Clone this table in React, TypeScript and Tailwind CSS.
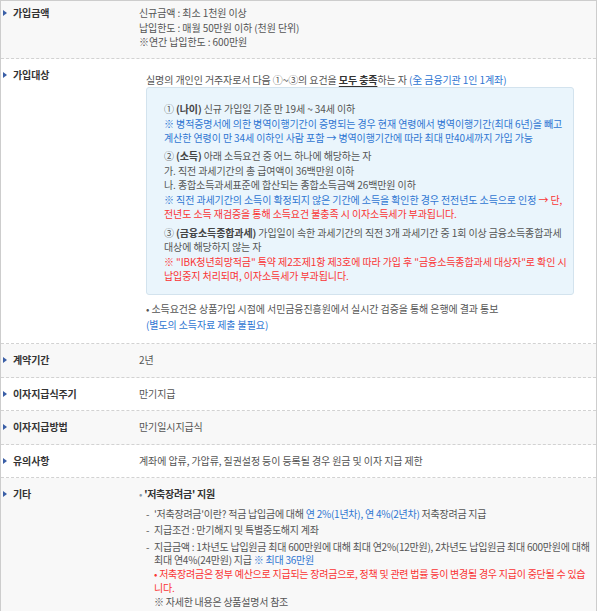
import React from "react";

function Tri() {
  return (
    <svg className="absolute left-[2px] top-[4px]" width="4" height="6" viewBox="0 0 4 6">
      <polygon points="0,0 4,3 0,6" fill="#3a5ea6" />
    </svg>
  );
}

function Row({
  label,
  gray,
  pad,
  children,
}: {
  label: string;
  gray?: boolean;
  pad: string;
  children: React.ReactNode;
}) {
  return (
    <div
      className={`flex border-b border-dashed border-[#d2d2d2] ${gray ? "bg-[#f8f8f8]" : "bg-white"} ${pad}`}
    >
      <div className="relative w-[138px] shrink-0 pl-[12px] font-bold text-[#333]">
        <Tri />
        {label}
      </div>
      <div className="min-w-0 flex-1 overflow-hidden">{children}</div>
    </div>
  );
}

export default function App() {
  return (
    <div className="h-[611px] w-[600px] overflow-hidden bg-white">
      <div className="w-[597px] border-x border-t border-[#cdcdcd] font-['Noto_Sans_CJK_KR','Noto_Sans',sans-serif] text-[10px] leading-[14.5px] tracking-[-0.1px] text-[#555] whitespace-nowrap">
        <Row label="가입금액" gray pad="pt-[5px] pb-[8px]">
          <div>신규금액 : 최소 1천원 이상</div>
          <div>납입한도 : 매월 50만원 이하 (천원 단위)</div>
          <div>※연간 납입한도 : 600만원</div>
        </Row>

        <Row label="가입대상" pad="pt-[9px] pb-[11px]">
          <div className="pl-[7px] pt-[5px]">
            <div>
              실명의 개인인 거주자로서 다음 ①~③의 요건을{" "}
              <span className="font-bold text-[#333] underline underline-offset-2">모두 충족</span>하는 자{" "}
              <span className="text-[#2f76d2]">(全 금융기관 1인 1계좌)</span>
            </div>
            <div className="w-[428px] rounded-[3px] border border-[#d3e3ee] bg-[#eaf5fc] pl-[17px] pt-[14px] pb-[10px]">
              <div>
                <div>
                  ① <span className="font-bold text-[#444]">(나이)</span> 신규 가입일 기준 만 19세 ~ 34세 이하
                </div>
                <div className="text-[#2f76d2]">
                  ※ 병적증명서에 의한 병역이행기간이 증명되는 경우 현재 연령에서 병역이행기간(최대 6년)을 빼고
                  <br />
                  계산한 연령이 만 34세 이하인 사람 포함 → 병역이행기간에 따라 최대 만40세까지 가입 가능
                </div>
              </div>
              <div className="mt-[3.5px]">
                <div>
                  ② <span className="font-bold text-[#444]">(소득)</span> 아래 소득요건 중 어느 하나에 해당하는 자
                </div>
                <div>가. 직전 과세기간의 총 급여액이 36백만원 이하</div>
                <div>나. 종합소득과세표준에 합산되는 종합소득금액 26백만원 이하</div>
                <div className="text-[#2f76d2]">
                  ※ 직전 과세기간의 소득이 확정되지 않은 기간에 소득을 확인한 경우 전전년도 소득으로 인정{" "}
                  <span className="text-[#fa3434]">→ 단,</span>
                </div>
                <div className="text-[#fa3434]">전년도 소득 재검증을 통해 소득요건 불충족 시 이자소득세가 부과됩니다.</div>
              </div>
              <div className="mt-[4px]">
                <div>
                  ③ <span className="font-bold text-[#444]">(금융소득종합과세)</span> 가입일이 속한 과세기간의 직전 3개 과세기간 중 1회 이상 금융소득종합과세
                </div>
                <div>대상에 해당하지 않는 자</div>
                <div className="text-[#fa3434]">
                  ※ "IBK청년희망적금" 특약 제2조제1항 제3호에 따라 가입 후 "금융소득종합과세 대상자"로 확인 시
                  <br />
                  납입중지 처리되며, 이자소득세가 부과됩니다.
                </div>
              </div>
            </div>
            <div className="mt-[7px]">• 소득요건은 상품가입 시점에 서민금융진흥원에서 실시간 검증을 통해 은행에 결과 통보</div>
            <div className="mt-[1.5px] text-[#2f76d2]">(별도의 소득자료 제출 불필요)</div>
          </div>
        </Row>

        <Row label="계약기간" gray pad="py-[9px]">
          <div>2년</div>
        </Row>
        <Row label="이자지급식주기" pad="py-[9px]">
          <div>만기지급</div>
        </Row>
        <Row label="이자지급방법" gray pad="py-[9px]">
          <div>만기일시지급식</div>
        </Row>
        <Row label="유의사항" pad="py-[9px]">
          <div>계좌에 압류, 가압류, 질권설정 등이 등록될 경우 원금 및 이자 지급 제한</div>
        </Row>

        <Row label="기타" gray pad="pt-[9px] pb-[20px]">
          <div className="leading-[14px] tracking-[-0.25px]">
            <div className="leading-[14.5px]">
              <span className="text-[#8a9aa8]">•</span>{" "}
              <span className="font-bold text-[#333]">'저축장려금' 지원</span>
            </div>
            <div className="relative mt-[5px] pl-[15px]">
              <span className="absolute left-[7px]">-</span>
              '저축장려금'이란? 적금 납입금에 대해{" "}
              <span className="text-[#2f76d2]">연 2%(1년차), 연 4%(2년차)</span> 저축장려금 지급
            </div>
            <div className="relative mt-[2px] pl-[15px]">
              <span className="absolute left-[7px]">-</span>
              지급조건 : 만기해지 및 특별중도해지 계좌
            </div>
            <div className="relative mt-[3px] pl-[15px] leading-[13.8px]">
              <span className="absolute left-[7px]">-</span>
              지급금액 : 1차년도 납입원금 최대 600만원에 대해 최대 연2%(12만원), 2차년도 납입원금 최대 600만원에 대해
              <br />
              최대 연4%(24만원) 지급 <span className="text-[#2f76d2]">※ 최대 36만원</span>
              <div className="text-[#fa3434]">
                • 저축장려금은 정부 예산으로 지급되는 장려금으로, 정책 및 관련 법률 등이 변경될 경우 지급이 중단될 수 있습
                <br />
                니다.
              </div>
              <div>※ 자세한 내용은 상품설명서 참조</div>
            </div>
          </div>
        </Row>
      </div>
    </div>
  );
}
